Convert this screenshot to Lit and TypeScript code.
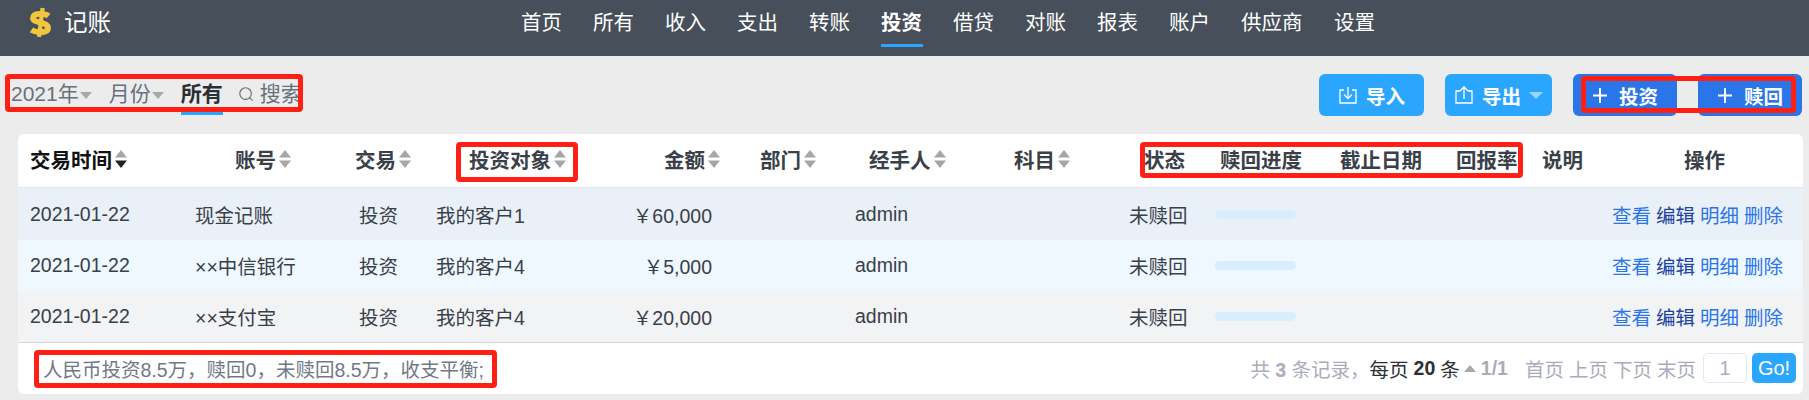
import { LitElement, html, css, svg } from "lit";
import { customElement } from "lit/decorators.js";

const NAV = ["首页","所有","收入","支出","转账","投资","借贷","对账","报表","账户","供应商","设置"];
const HEAD: [string, boolean][] = [["交易时间",true],["账号",true],["交易",true],["投资对象",true],["金额",true],["部门",true],["经手人",true],["科目",true],["状态",false],["赎回进度",false],["截止日期",false],["回报率",false],["说明",false],["操作",false]];
const ROWS = [
  ["2021-01-22","现金记账","投资","我的客户1","￥60,000"],
  ["2021-01-22","××中信银行","投资","我的客户4","￥5,000"],
  ["2021-01-22","××支付宝","投资","我的客户4","￥20,000"],
];
const sortIcon = (active = false) => html`<svg class="sort" width="14" height="20" viewBox="0 0 14 20"><path d="M7 1 13 8.500H1z" fill="#a6a6a6"/><path d="M7 19 13 11.500H1z" fill="${active ? "#222" : "#a6a6a6"}"/></svg>`;
const plus = svg`<path d="M8 1v15M1 8.500h14" stroke="#fff" stroke-width="2" fill="none"/>`;

@customElement("app-root")
export class AppRoot extends LitElement {
  static styles = css`
    :host { display: block; position: relative; width: 1809px; height: 400px; overflow: hidden; background: #ececec; color: #3a4048;
      font-family: "Liberation Sans", "Noto Sans CJK SC", sans-serif; font-size: 19.5px; }
    header { height: 56px; background: #474f5a; display: flex; align-items: flex-start; color: #fff; position: relative; }
    .logo { display: flex; align-items: center; gap: 11px; padding: 7px 0 0 27px; width: 521px; box-sizing: border-box; font-size: 23.500px; line-height: 30px; }
    nav { display: flex; gap: 30px; font-size: 20.5px; height: 56px; }
    nav a { height: 56px; box-sizing: border-box; padding-top: 8px; line-height: 29px; position: relative; width: 42px; white-space: nowrap; }
    nav a.wide { width: 63px; }
    nav a.on { font-weight: 700; }
    nav a.on::after { content: ""; position: absolute; left: 0; right: 0; top: 44px; height: 3px; background: #2aa6ff; }
    .bar { display: flex; justify-content: space-between; height: 78px; box-sizing: border-box; padding: 18px 7px 0 11px; }
    .filters { display: flex; align-items: flex-start; font-size: 21px; color: #66717c; height: 41px; line-height: 38px; padding-top: 1px; box-sizing: border-box; }
    .filters > * { display: flex; align-items: center; height: 38px; }
    .tri { width: 0; height: 0; border: 6px solid transparent; border-top: 7px solid #a9a9a9; border-bottom: 0; margin-left: 1px; margin-top: 2px; }
    .all { margin-left: 17px; margin-right: 15px; color: #2b3036; font-weight: 700; height: 40px !important; border-bottom: 3px solid #2aa6ff; box-sizing: border-box; width: 42px; white-space: nowrap; }
    .month { margin-left: 17px; }
    .search { gap: 6px; width: 64px; overflow: hidden; white-space: nowrap; }
    .btns { display: flex; gap: 21px; }
    .btn { height: 42px; border-radius: 6px; background: #2aa6ff; color: #fff; font-size: 19.500px; font-weight: 700; display: flex; align-items: center; justify-content: center; gap: 8px; box-sizing: border-box; width: 105px; }
    .btn.exp { width: 107px; }
    .btn.dark { background: #2a75e8; width: 104px; gap: 10px; }
    .btn .c { width: 0; height: 0; border: 7px solid transparent; border-top: 7px solid #9ad4fb; border-bottom: 0; }
    .card { margin: 0 6px 0 18px; background: #fff; border-radius: 6px; overflow: hidden; height: 260px; }
    .hrow, .row { display: grid; align-items: center; }
    .hrow { height: 54px; padding: 0 0 3px 12px; font-weight: 700; font-size: 20.5px; color: #3a4048; border-bottom: 1px solid #e6eaee; box-sizing: border-box;
      grid-template-columns: 205px 120px 114px 195px 96px 109px 145px 130px 76px 120px 116px 86px 142px 1fr; }
    .hrow > div { display: flex; align-items: center; white-space: nowrap; gap: 2px; }
    .hrow > div.first { color: #111; }
    .row { height: 51px; padding-left: 12px; color: #3a4048;
      grid-template-columns: 165px 164px 77px 124px 152px 143px 274px 86px 397px 1fr; }
    .row:nth-child(2) { background: #e9f0f8; height: 52px; } .row:nth-child(3) { background: #eff7ff; } .row:nth-child(4) { background: #f2f3f5; }
    .row > div { white-space: nowrap; }
    .amt { text-align: right; }
    .prog { width: 81px; height: 9px; border-radius: 5px; background: #d9eefc; }
    .acts { display: flex; gap: 5px; color: #2a75e8; }
    .acts .e { color: #22429f; }
    .foot { border-top: 1px solid #d5dae0; height: 51px; box-sizing: border-box; display: flex; align-items: center; justify-content: space-between; padding: 0 7px 0 25px; }
    .sum { color: #6f7a86; }
    .pager { display: flex; align-items: center; color: #a9adbb; white-space: nowrap; }
    .pager b { font-weight: 700; }
    .per { color: #2b3036; display: flex; gap: 5px; align-items: center; }
    .pager .tri2 { width: 0; height: 0; border: 6px solid transparent; border-bottom: 7px solid #a9a9a9; border-top: 0; margin: 0 5px 0 4px; }
    .pg { display: flex; gap: 5px; margin-left: 17px; }
    .ipt { width: 44px; height: 30px; border: 1px solid #e3e6ee; border-radius: 5px; box-sizing: border-box; margin-left: 7px; text-align: center; line-height: 28px; }
    .go { width: 44px; height: 30px; background: #2aa6ff; color: #fff; border-radius: 5px; margin-left: 5px; text-align: center; line-height: 30px; font-size: 20px; }
    .mark { position: absolute; border: 5px solid #ff2015; border-radius: 4px; box-sizing: border-box; pointer-events: none; }
  `;

  render() {
    return html`
      <header>
        <div class="logo">
          <svg width="26" height="32" viewBox="0 0 24 30"><path d="M20 8.500C17 6 5.500 5 5.500 10.500c0 5 14 3 14 9 0 5.500-11 5-15.500 2" fill="none" stroke="#f0c63f" stroke-width="5.500"/><path d="M14.500 1 11 28" stroke="#f0c63f" stroke-width="4" fill="none"/></svg>
          <span>记账</span>
        </div>
        <nav>${NAV.map((n) => html`<a class="${n === "投资" ? "on" : n.length > 2 ? "wide" : ""}">${n}</a>`)}</nav>
      </header>
      <div class="bar">
        <div class="filters">
          <div>2021年<i class="tri"></i></div>
          <div class="month">月份<i class="tri"></i></div>
          <div class="all">所有</div>
          <div class="search"><svg width="20" height="20" viewBox="0 0 18 18" fill="none" stroke="#66717c" stroke-width="1.300"><circle cx="8.500" cy="8.500" r="6.500"/><path d="m13 13 3.500 3.500"/></svg><span>搜索</span></div>
        </div>
        <div class="btns">
          <div class="btn"><svg width="20" height="20" viewBox="0 0 20 20" fill="none" stroke="#fff" stroke-width="1.300"><path d="M6 5H2v13h16V5h-4M10 2v11M6 9.500l4 4 4-4"/></svg>导入</div>
          <div class="btn exp"><svg width="20" height="20" viewBox="0 0 20 20" fill="none" stroke="#fff" stroke-width="1.300"><path d="M6 6H2v12h16V6h-4M10 14V2M6 6l4-4 4 4"/></svg>导出<i class="c"></i></div>
          <div class="btn dark"><svg width="17" height="17" viewBox="0 0 17 17">${plus}</svg>投资</div>
          <div class="btn dark"><svg width="17" height="17" viewBox="0 0 17 17">${plus}</svg>赎回</div>
        </div>
      </div>
      <div class="card">
        <div class="hrow">${HEAD.map(([t, s], i) => html`<div class="${i === 0 ? "first" : ""}">${t}${s ? sortIcon(i === 0) : ""}</div>`)}</div>
        ${ROWS.map((r) => html`<div class="row">
          <div>${r[0]}</div><div>${r[1]}</div><div>${r[2]}</div><div>${r[3]}</div><div class="amt">${r[4]}</div><div></div><div>admin</div><div>未赎回</div>
          <div><div class="prog"></div></div>
          <div class="acts"><span>查看</span><span class="e">编辑</span><span>明细</span><span>删除</span></div>
        </div>`)}
        <div class="foot">
          <div class="sum">人民币投资8.5万，赎回0，未赎回8.5万，收支平衡;</div>
          <div class="pager">
            <span>共 <b>3</b> 条记录，</span>
            <span class="per">每页 <b>20</b> 条</span><i class="tri2"></i><b>1/1</b>
            <div class="pg"><span>首页</span><span>上页</span><span>下页</span><span>末页</span></div>
            <div class="ipt">1</div><div class="go">Go!</div>
          </div>
        </div>
      </div>
      <div class="mark" style="left:5px;top:74px;width:298px;height:38px"></div>
      <div class="mark" style="left:1581px;top:76px;width:215px;height:37px"></div>
      <div class="mark" style="left:456px;top:142px;width:122px;height:40px"></div>
      <div class="mark" style="left:1140px;top:142px;width:383px;height:36px"></div>
      <div class="mark" style="left:34px;top:350px;width:463px;height:38px"></div>
    `;
  }
}
